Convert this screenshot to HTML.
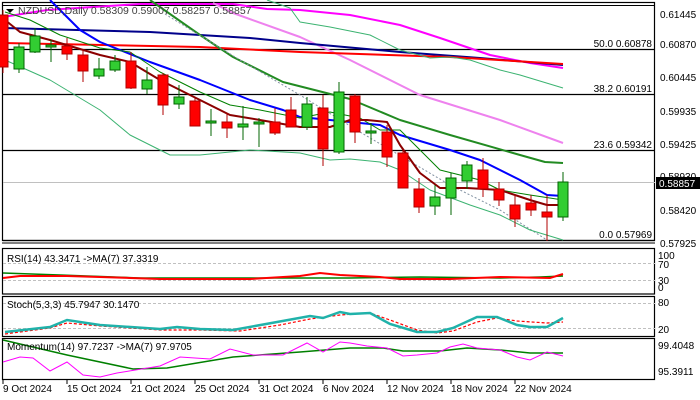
<!DOCTYPE html>
<html><head><meta charset="utf-8"><style>
html,body{margin:0;padding:0;background:#fff;}
svg{display:block;font-family:"Liberation Sans",sans-serif;}
</style></head><body>
<svg width="700" height="400" viewBox="0 0 700 400" xmlns="http://www.w3.org/2000/svg">
<rect width="700" height="400" fill="#fff"/>
<!-- panel borders -->
<g fill="none" stroke="#000" stroke-width="1.2">
<rect x="2.5" y="2.5" width="652" height="238"/>
<rect x="2.5" y="248.5" width="652" height="45.5"/>
<rect x="2.5" y="296.5" width="652" height="40"/>
<rect x="2.5" y="338.5" width="652" height="41"/>
</g>
<line x1="2" y1="5.5" x2="655" y2="5.5" stroke="#000"/>
<line x1="2" y1="243" x2="655" y2="243" stroke="#000"/>
<!-- fib lines -->
<g stroke="#000" stroke-width="1.2">
<line x1="3" y1="49.5" x2="655" y2="49.5"/>
<line x1="3" y1="94.5" x2="655" y2="94.5"/>
<line x1="3" y1="150.5" x2="655" y2="150.5"/>
<line x1="3" y1="240.5" x2="655" y2="240.5"/>
</g>
<line x1="3" y1="182.5" x2="655" y2="182.5" stroke="#c0c0c0"/>
<!-- MAs -->
<g fill="none" stroke-linejoin="round">
<polyline stroke="#ff00ff" stroke-width="2" points="3,17 47,10 140,4 233,4 267,9 300,10 350,15 400,25 440,38 490,55 530,63 563,68"/>
<polyline stroke="#ee82ee" stroke-width="2" points="213,3 233,13 300,37 350,60 420,95 500,120 563,143"/>
<polyline stroke="#00008b" stroke-width="2" points="3,28 150,32 250,38 300,43 400,52 480,58 563,65"/>
<polyline stroke="#ff0000" stroke-width="2" points="3,43 200,47 300,52 450,57 563,64"/>
<polyline stroke="#3cb371" stroke-width="1" points="267,0 290,8 300,22 330,27 370,35 400,50 430,58 450,57 470,60 500,70 520,75 563,88"/>
<polyline stroke="#228b22" stroke-width="2" points="150,0 200,35 233,57 283,82 350,99 400,120 450,135 520,155 545,162 563,163"/>
<polyline stroke="#8090a0" stroke-width="1" stroke-dasharray="2,2" points="165,14 240,60 300,95 360,132 450,185 500,210 547,240"/>
<polyline stroke="#0000ff" stroke-width="2" points="50,0 60,10 80,30 100,42 150,62 200,80 250,100 283,110 300,117 350,122 380,125 400,135 450,150 480,160 520,180 547,195 563,196"/>
<polyline stroke="#008000" stroke-width="1" points="5,12 30,20 60,35 100,48 130,52 160,72 200,92 230,105 260,110 300,118 330,112 360,118 380,130 400,130 420,150 440,170 460,175 480,180 500,190 530,195 563,200"/>
<polyline stroke="#8b0000" stroke-width="2" points="5,20 20,32 50,40 100,55 130,62 160,80 200,100 230,115 260,120 300,127 330,127 350,120 367,120 387,122 400,145 420,173 440,188 467,188 500,190 530,200 547,205 563,205"/>
<polyline stroke="#3cb371" stroke-width="1" points="5,60 50,80 100,110 130,135 170,155 200,155 250,150 300,153 330,160 350,159 380,162 400,170 430,190 470,205 500,215 530,230 563,240"/>
</g>
<!-- candles -->
<g stroke-width="1">
<g stroke="#b00000" fill="#ff0000">
<line x1="3" y1="10" x2="3" y2="73"/><rect x="-2" y="15" width="10" height="52"/>
<line x1="67" y1="38" x2="67" y2="60"/><rect x="62" y="46" width="10" height="8"/>
<line x1="83" y1="50" x2="83" y2="82"/><rect x="78" y="55" width="10" height="16"/>
<line x1="131" y1="52" x2="131" y2="89"/><rect x="126" y="61" width="10" height="27"/>
<line x1="163" y1="73" x2="163" y2="115"/><rect x="158" y="75" width="10" height="30"/>
<line x1="195" y1="98" x2="195" y2="126"/><rect x="190" y="101" width="10" height="25"/>
<line x1="227" y1="113" x2="227" y2="138"/><rect x="222" y="122" width="10" height="6"/>
<line x1="275" y1="108" x2="275" y2="135"/><rect x="270" y="122" width="10" height="11"/>
<line x1="291" y1="97" x2="291" y2="127"/><rect x="286" y="110" width="10" height="17"/>
<line x1="323" y1="95" x2="323" y2="166"/><rect x="318" y="108" width="10" height="41"/>
<line x1="355" y1="94" x2="355" y2="143"/><rect x="350" y="96" width="10" height="36"/>
<line x1="387" y1="125" x2="387" y2="167"/><rect x="382" y="132" width="10" height="25"/>
<line x1="403" y1="150" x2="403" y2="188"/><rect x="398" y="153" width="10" height="35"/>
<line x1="419" y1="178" x2="419" y2="213"/><rect x="414" y="189" width="10" height="18"/>
<line x1="483" y1="158" x2="483" y2="197"/><rect x="478" y="170" width="10" height="19"/>
<line x1="499" y1="182" x2="499" y2="206"/><rect x="494" y="189" width="10" height="11"/>
<line x1="515" y1="195" x2="515" y2="227"/><rect x="510" y="205" width="10" height="14"/>
<line x1="531" y1="195" x2="531" y2="216"/><rect x="526" y="203" width="10" height="7"/>
<line x1="547" y1="195" x2="547" y2="241"/><rect x="542" y="212" width="10" height="5"/>
</g>
<g stroke="#006400" fill="#32cd32">
<line x1="19" y1="43" x2="19" y2="73"/><rect x="14" y="47" width="10" height="22"/>
<line x1="35" y1="28" x2="35" y2="53"/><rect x="30" y="36" width="10" height="16"/>
<line x1="51" y1="40" x2="51" y2="62"/><rect x="46" y="45" width="10" height="2"/>
<line x1="99" y1="58" x2="99" y2="79"/><rect x="94" y="69" width="10" height="7"/>
<line x1="115" y1="55" x2="115" y2="72"/><rect x="110" y="61" width="10" height="9"/>
<line x1="147" y1="67" x2="147" y2="94"/><rect x="142" y="80" width="10" height="9"/>
<line x1="179" y1="85" x2="179" y2="109"/><rect x="174" y="97" width="10" height="7"/>
<line x1="211" y1="109" x2="211" y2="136"/><rect x="206" y="121" width="10" height="2"/>
<line x1="243" y1="106" x2="243" y2="140"/><rect x="238" y="124" width="10" height="3"/>
<line x1="259" y1="118" x2="259" y2="147"/><rect x="254" y="122" width="10" height="2"/>
<line x1="307" y1="97" x2="307" y2="130"/><rect x="302" y="104" width="10" height="23"/>
<line x1="339" y1="82" x2="339" y2="154"/><rect x="334" y="92" width="10" height="60"/>
<line x1="371" y1="123" x2="371" y2="144"/><rect x="366" y="131" width="10" height="2"/>
<line x1="435" y1="185" x2="435" y2="215"/><rect x="430" y="197" width="10" height="9"/>
<line x1="451" y1="173" x2="451" y2="215"/><rect x="446" y="178" width="10" height="20"/>
<line x1="467" y1="161" x2="467" y2="189"/><rect x="462" y="165" width="10" height="16"/>
<line x1="563" y1="172" x2="563" y2="221"/><rect x="558" y="182" width="10" height="35"/>
</g>
</g>
<!-- header -->
<polygon points="6,9 14,9 10,13" fill="#000"/>
<text x="18" y="14" font-size="10.5" fill="#404040">NZDUSD,Daily  0.58309 0.59007 0.58257 0.58857</text>
<!-- fib labels -->
<g font-size="10" fill="#000" text-anchor="end">
<text x="652" y="47">50.0 0.60878</text>
<text x="652" y="92">38.2 0.60191</text>
<text x="652" y="148">23.6 0.59342</text>
<text x="652" y="238">0.0 0.57969</text>
</g>
<!-- price axis -->
<g font-size="10" fill="#000">
<text x="660" y="18">0.61445</text>
<text x="660" y="48">0.60870</text>
<text x="660" y="81">0.60445</text>
<text x="660" y="115">0.59935</text>
<text x="660" y="148">0.59425</text>
<text x="660" y="180">0.58930</text>
<text x="660" y="214">0.58420</text>
<text x="660" y="247">0.57925</text>
</g>
<rect x="656" y="177" width="44" height="12" fill="#000"/>
<text x="659" y="187" font-size="10" fill="#fff">0.58857</text>
<!-- RSI -->
<g stroke="#c0c0c0" stroke-dasharray="3,2"><line x1="3" y1="263.5" x2="655" y2="263.5"/><line x1="3" y1="280.5" x2="655" y2="280.5"/>
<line x1="3" y1="303.5" x2="655" y2="303.5"/><line x1="3" y1="328.5" x2="655" y2="328.5"/></g>
<polyline fill="none" stroke="#008000" stroke-width="1.5" points="3,273 60,275 140,278 250,278 350,278 420,277 500,278 540,277 563,276"/>
<polyline fill="none" stroke="#ff0000" stroke-width="2" points="3,278 20,276 67,276 130,278 160,279 250,279 283,277 300,276 320,273 340,275 380,277 400,279 450,279 500,277 550,278 563,274"/>
<text x="7" y="262" font-size="10">RSI(14) 43.3471  -&gt;MA(7) 37.3319</text>
<g font-size="10" fill="#000"><text x="658" y="259">100</text><text x="658" y="268">70</text><text x="658" y="284">30</text><text x="658" y="291">0</text></g>
<!-- Stoch -->
<polyline fill="none" stroke="#ff0000" stroke-width="1.2" stroke-dasharray="3,2" points="5,334 50,328 67,323 100,326 160,330 200,330 240,331 280,325 310,319 340,315 370,313 390,320 417,330 437,333 453,331 477,322 497,318 517,321 547,323 563,322"/>
<polyline fill="none" stroke="#20b2aa" stroke-width="2.5" points="5,332 50,327 67,320 100,325 160,329 177,327 200,329 233,330 277,322 310,316 323,318 340,312 350,314 370,313 390,324 417,332 437,332 453,328 477,317 497,317 517,325 530,327 547,327 563,318"/>
<text x="7" y="308" font-size="10">Stoch(5,3,3) 45.7947 30.1470</text>
<g font-size="10" fill="#000"><text x="658" y="306">80</text><text x="658" y="333">20</text></g>
<!-- Momentum -->
<polyline fill="none" stroke="#008000" stroke-width="1.5" points="3,340 67,355 133,369 167,368 233,357 300,352 350,348 383,348 403,351 440,351 467,348 500,350 530,353 563,353"/>
<polyline fill="none" stroke="#ff00ff" stroke-width="1" points="3,362 20,357 33,358 50,371 67,362 83,375 100,377 117,373 160,366 180,357 210,359 230,349 253,355 283,355 307,343 323,352 340,342 350,343 367,346 387,348 403,356 417,355 437,353 450,347 463,344 477,348 500,350 517,357 530,360 547,352 563,356"/>
<text x="7" y="350" font-size="10">Momentum(14) 97.7237  -&gt;MA(7) 97.9705</text>
<g font-size="10" fill="#000"><text x="658" y="349">99.4048</text><text x="658" y="375">95.3911</text></g>
<!-- dates -->
<g stroke="#000"><line x1="3" y1="380" x2="3" y2="384"/><line x1="67" y1="380" x2="67" y2="384"/><line x1="131" y1="380" x2="131" y2="384"/><line x1="195" y1="380" x2="195" y2="384"/><line x1="259" y1="380" x2="259" y2="384"/><line x1="323" y1="380" x2="323" y2="384"/><line x1="387" y1="380" x2="387" y2="384"/><line x1="451" y1="380" x2="451" y2="384"/><line x1="515" y1="380" x2="515" y2="384"/></g>
<g font-size="10" fill="#000">
<text x="3" y="392">9 Oct 2024</text>
<text x="67" y="392">15 Oct 2024</text>
<text x="131" y="392">21 Oct 2024</text>
<text x="195" y="392">25 Oct 2024</text>
<text x="259" y="392">31 Oct 2024</text>
<text x="323" y="392">6 Nov 2024</text>
<text x="387" y="392">12 Nov 2024</text>
<text x="451" y="392">18 Nov 2024</text>
<text x="515" y="392">22 Nov 2024</text>
</g>
</svg>
</body></html>
